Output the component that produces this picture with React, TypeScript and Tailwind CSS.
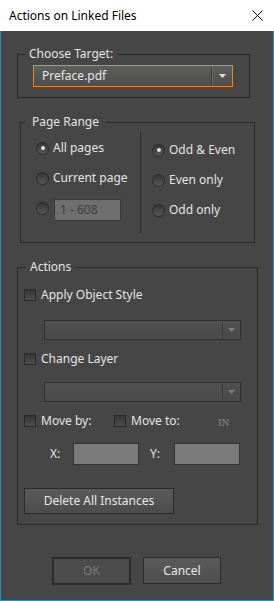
import React from 'react';

const Radio = ({ checked }: { checked?: boolean }) => (
  <span className="w-[13px] h-[13px] rounded-full border border-[#2a2a2a] bg-linear-to-b from-[#363636] to-[#575757] flex items-center justify-center shrink-0">
    {checked && <span className="w-[4px] h-[4px] rounded-full bg-[#e2e2e2]" />}
  </span>
);

const Check = () => (
  <span className="w-[12px] h-[12px] border border-[#2a2a2a] bg-linear-to-b from-[#363636] to-[#4e4e4e] shrink-0" />
);

const Arrow = ({ color }: { color: string }) => (
  <svg width="7" height="4" viewBox="0 0 7 4" className="shrink-0">
    <path d="M0 0 H7 L3.5 4 Z" fill={color} />
  </svg>
);

const Dropdown = () => (
  <div className="ml-[20px] w-[197px] h-[20px] border border-[#2e2e2e] bg-linear-to-b from-[#515151] to-[#4a4a4a] flex items-center justify-end pr-[5px]">
    <span className="w-[1px] h-[16px] bg-[#3a3a3a] mr-[5px]" />
    <Arrow color="#7c7c7c" />
  </div>
);

const App = () => {
  return (
    <div className="w-[274px] h-[601px] flex flex-col font-['Noto_Sans',sans-serif] text-[12px] select-none">
      {/* title bar */}
      <div className="h-[31px] bg-white flex items-center justify-between pl-[9px] pr-[11px] shrink-0">
        <span className="text-black text-[12px]">Actions on Linked Files</span>
        <svg width="11" height="11" viewBox="0 0 11 11">
          <path d="M0.5 0.5 L10.5 10.5 M10.5 0.5 L0.5 10.5" stroke="#111" strokeWidth="1" />
        </svg>
      </div>

      <div className="flex-1 bg-[#464646] border-l border-r border-b border-[#2d8bbd] flex flex-col text-[#e4e4e4]">
        {/* Choose Target */}
        <fieldset className="ml-[16px] mt-[15px] w-[233px] border border-[#2a2a2a] pl-[15px] pb-[10px]">
          <legend className="ml-[-8px] px-[4px] h-[16px] leading-[16px]">Choose Target:</legend>
          <div className="mt-[3px] w-[200px] h-[22px] border border-[#e98a1e] bg-linear-to-b from-[#5f5f5f] to-[#4d4d4d] flex items-center pl-[8px] pr-[6px]">
            <span className="flex-1 text-[#e6e6e6]">Preface.pdf</span>
            <span className="w-[1px] h-[16px] bg-[#3a3a3a] border-r border-[#6a6a6a] box-content mr-[6px]" />
            <Arrow color="#dedede" />
          </div>
        </fieldset>

        {/* Page Range */}
        <fieldset className="ml-[19px] mt-[16px] w-[235px] border border-[#2a2a2a] pb-[9px] flex">
          <legend className="ml-[4px] px-[7px] h-[16px] leading-[16px]">Page Range</legend>
          <div className="flex">
            <div className="w-[119px] pl-[15px] pt-[3px] flex flex-col">
              <div className="h-[30px] flex items-center gap-[4px]">
                <Radio checked />
                <span>All pages</span>
              </div>
              <div className="h-[30px] flex items-center gap-[4px]">
                <Radio />
                <span>Current page</span>
              </div>
              <div className="h-[30px] flex items-center gap-[5px]">
                <Radio />
                <div className="w-[67px] h-[22px] mt-[4px] bg-[#6f6f6f] border border-[#3a3a3a] flex items-center pl-[5px] text-[#3e3e3e]">
                  1 - 608
                </div>
              </div>
            </div>
            <div className="mt-[2px] w-[1px] h-[101px] bg-[#2e2e2e]" />
            <div className="pl-[11px] pt-[5px] flex flex-col">
              <div className="h-[30px] flex items-center gap-[4px]">
                <Radio checked />
                <span>Odd &amp; Even</span>
              </div>
              <div className="h-[30px] flex items-center gap-[4px]">
                <Radio />
                <span>Even only</span>
              </div>
              <div className="h-[30px] flex items-center gap-[4px]">
                <Radio />
                <span>Odd only</span>
              </div>
            </div>
          </div>
        </fieldset>

        {/* Actions */}
        <fieldset className="ml-[16px] mt-[16px] w-[241px] border border-[#2a2a2a] pl-[6px] pb-[10px] flex flex-col">
          <legend className="ml-[2px] px-[4px] h-[16px] leading-[16px]">Actions</legend>
          <div className="mt-[12px] h-[16px] flex items-center gap-[5px]">
            <Check />
            <span>Apply Object Style</span>
          </div>
          <div className="mt-[17px]">
            <Dropdown />
          </div>
          <div className="mt-[11px] h-[16px] flex items-center gap-[5px]">
            <Check />
            <span>Change Layer</span>
          </div>
          <div className="mt-[15px]">
            <Dropdown />
          </div>
          <div className="mt-[11px] h-[16px] flex items-center">
            <Check />
            <span className="ml-[5px] w-[73px]">Move by:</span>
            <Check />
            <span className="ml-[5px] w-[87px]">Move to:</span>
            <span className="text-[9px] text-[#8c8c8c] font-['DejaVu_Serif',serif] mt-[5px]">IN</span>
          </div>
          <div className="mt-[14px] h-[22px] flex items-center">
            <span className="ml-[26px] w-[23px]">X:</span>
            <div className="w-[66px] h-[22px] bg-[#7a7a7a] border border-[#333333]" />
            <span className="ml-[11px] w-[24px]">Y:</span>
            <div className="w-[66px] h-[22px] bg-[#7a7a7a] border border-[#333333]" />
          </div>
          <button className="mt-[23px] w-[150px] h-[26px] border border-[#2b2b2b] bg-linear-to-b from-[#5b5b5b] to-[#4c4c4c] text-[#e6e6e6] flex items-center justify-center">
            Delete All Instances
          </button>
        </fieldset>

        {/* OK / Cancel */}
        <div className="mt-[32px] flex pl-[51px] gap-[12px]">
          <button className="w-[79px] h-[28px] border-2 border-[#2c2c2c] bg-[#4c4c4c] text-[#7a7a7a] flex items-center justify-center">
            OK
          </button>
          <button className="w-[78px] h-[27px] border border-[#2a2a2a] bg-linear-to-b from-[#5a5a5a] to-[#4f4f4f] text-[#e8e8e8] flex items-center justify-center">
            Cancel
          </button>
        </div>
      </div>
    </div>
  );
};

export default App;
